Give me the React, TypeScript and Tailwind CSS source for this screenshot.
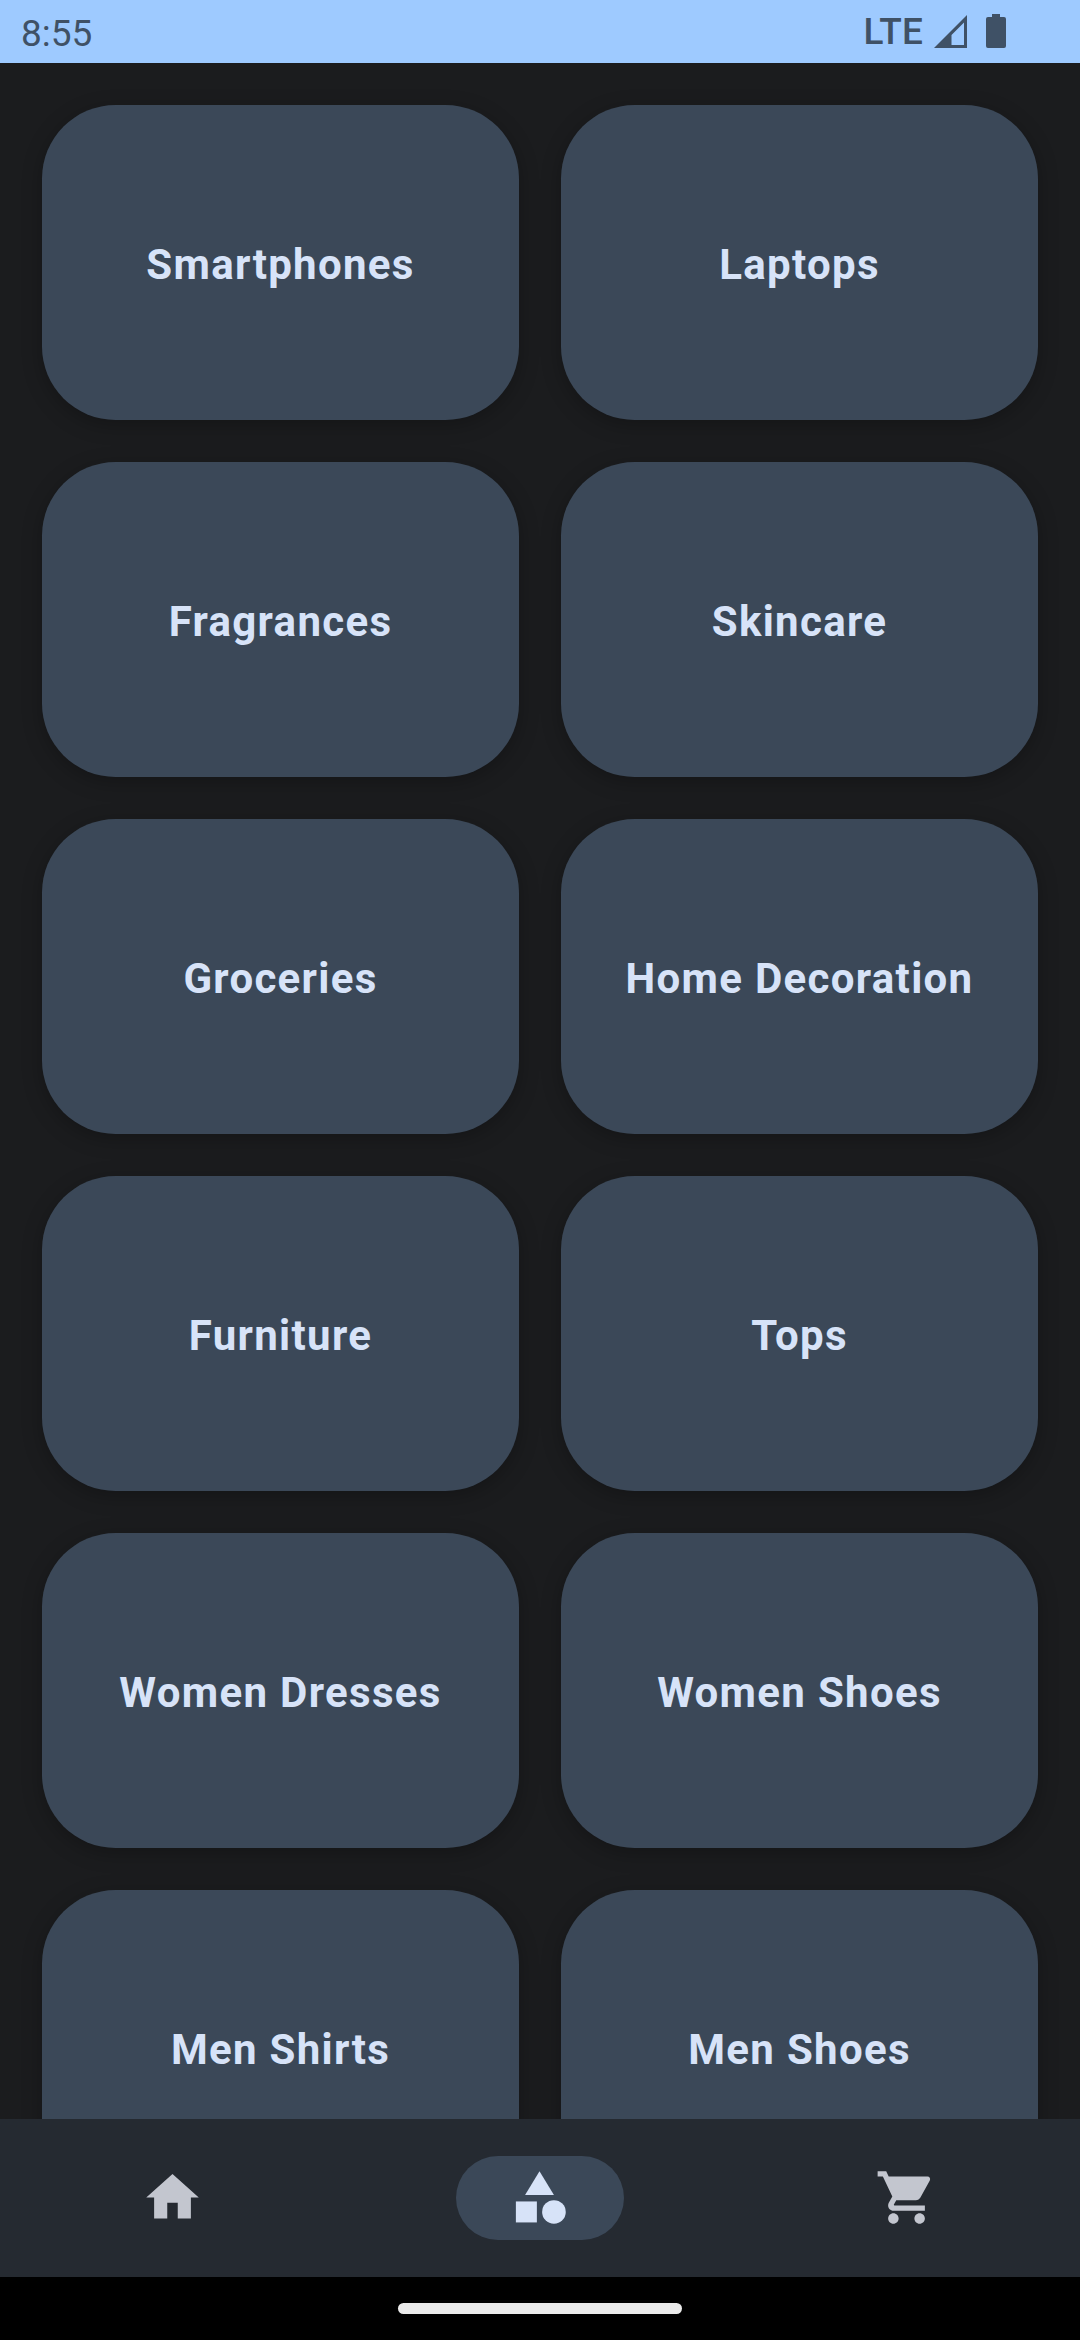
const categories = [
  "Smartphones",
  "Laptops",
  "Fragrances",
  "Skincare",
  "Groceries",
  "Home Decoration",
  "Furniture",
  "Tops",
  "Women Dresses",
  "Women Shoes",
  "Men Shirts",
  "Men Shoes",
];

function StatusBar() {
  return (
    <header className="flex h-[63px] shrink-0 items-center justify-between bg-[#9ecaff] pr-[74px] pl-[21px] text-[#3f5166]">
      <span className="pt-[3px] text-[37px] leading-none">8:55</span>
      <div className="flex items-center">
        <span className="mr-[11px] pb-px text-[37px] leading-none font-medium tracking-[0.2px]">LTE</span>
        <svg className="mr-[19px] mb-px h-[33px] w-[33px]" viewBox="0 0 33 33" fill="currentColor">
          <path fillRule="evenodd" d="M0 33 33 0V33ZM17.5 30H30V7.5L17.5 20Z" />
        </svg>
        <svg className="mb-px h-[34px] w-5" viewBox="0 0 20 34" fill="currentColor">
          <path d="M6 0h8v3h4a2 2 0 0 1 2 2v27a2 2 0 0 1-2 2H2a2 2 0 0 1-2-2V5a2 2 0 0 1 2-2h4z" />
        </svg>
      </div>
    </header>
  );
}

function NavBar() {
  return (
    <nav className="grid h-[158px] shrink-0 grid-cols-3 items-center justify-items-center gap-[21px] bg-[#252a31] text-[#c3c6cf]">
      <button aria-label="Home" className="pr-px pb-px">
        <svg className="h-[63px] w-[63px]" viewBox="0 0 24 24" fill="currentColor">
          <path d="M10 20v-6h4v6h5v-8h3L12 3 2 12h3v8z" />
        </svg>
      </button>
      <button aria-label="Categories" className="flex h-[84px] w-[168px] items-center justify-center rounded-full bg-[#3b4858] pr-px pb-px text-[#d7e3f8]">
        <svg className="h-[63px] w-[63px]" viewBox="0 0 24 24" fill="currentColor">
          <path d="m12 2-5.5 9h11z" />
          <circle cx="17.5" cy="17.5" r="4.5" />
          <path d="M3 13.5h8v8H3z" />
        </svg>
      </button>
      <button aria-label="Cart" className="pr-px pb-px">
        <svg className="h-[63px] w-[63px]" viewBox="0 0 24 24" fill="currentColor">
          <path d="M7 18c-1.1 0-1.99.9-1.99 2S5.9 22 7 22s2-.9 2-2-.9-2-2-2zM1 2v2h2l3.6 7.59-1.35 2.45c-.16.28-.25.61-.25.96 0 1.1.9 2 2 2h12v-2H7.42c-.14 0-.25-.11-.25-.25l.03-.12.9-1.63h7.45c.75 0 1.41-.41 1.75-1.03l3.58-6.49A1.003 1.003 0 0 0 20 4H5.21l-.94-2H1zm16 16c-1.1 0-1.99.9-1.99 2s.89 2 1.99 2 2-.9 2-2-.9-2-2-2z" />
        </svg>
      </button>
    </nav>
  );
}

export default function App() {
  return (
    <div className="flex h-[2340px] w-[1080px] flex-col overflow-hidden bg-[#1b1c1e] font-[Roboto,sans-serif]">
      <StatusBar />
      <main className="grid min-h-0 flex-1 auto-rows-[315px] grid-cols-2 gap-[42px] overflow-hidden p-[42px]">
        {categories.map((name) => (
          <button
            key={name}
            className="flex items-center justify-center rounded-[73.5px] bg-[#3b4858] pt-1 text-[42px] font-bold tracking-[1.3125px] text-[#d7e3f8] shadow-[0_5px_20px_rgba(0,0,0,0.25)]"
          >
            {name}
          </button>
        ))}
      </main>
      <NavBar />
      <footer className="flex h-[63px] shrink-0 items-center justify-center bg-black">
        <div className="h-[11px] w-[284px] rounded-full bg-[#ebebeb]" />
      </footer>
    </div>
  );
}
